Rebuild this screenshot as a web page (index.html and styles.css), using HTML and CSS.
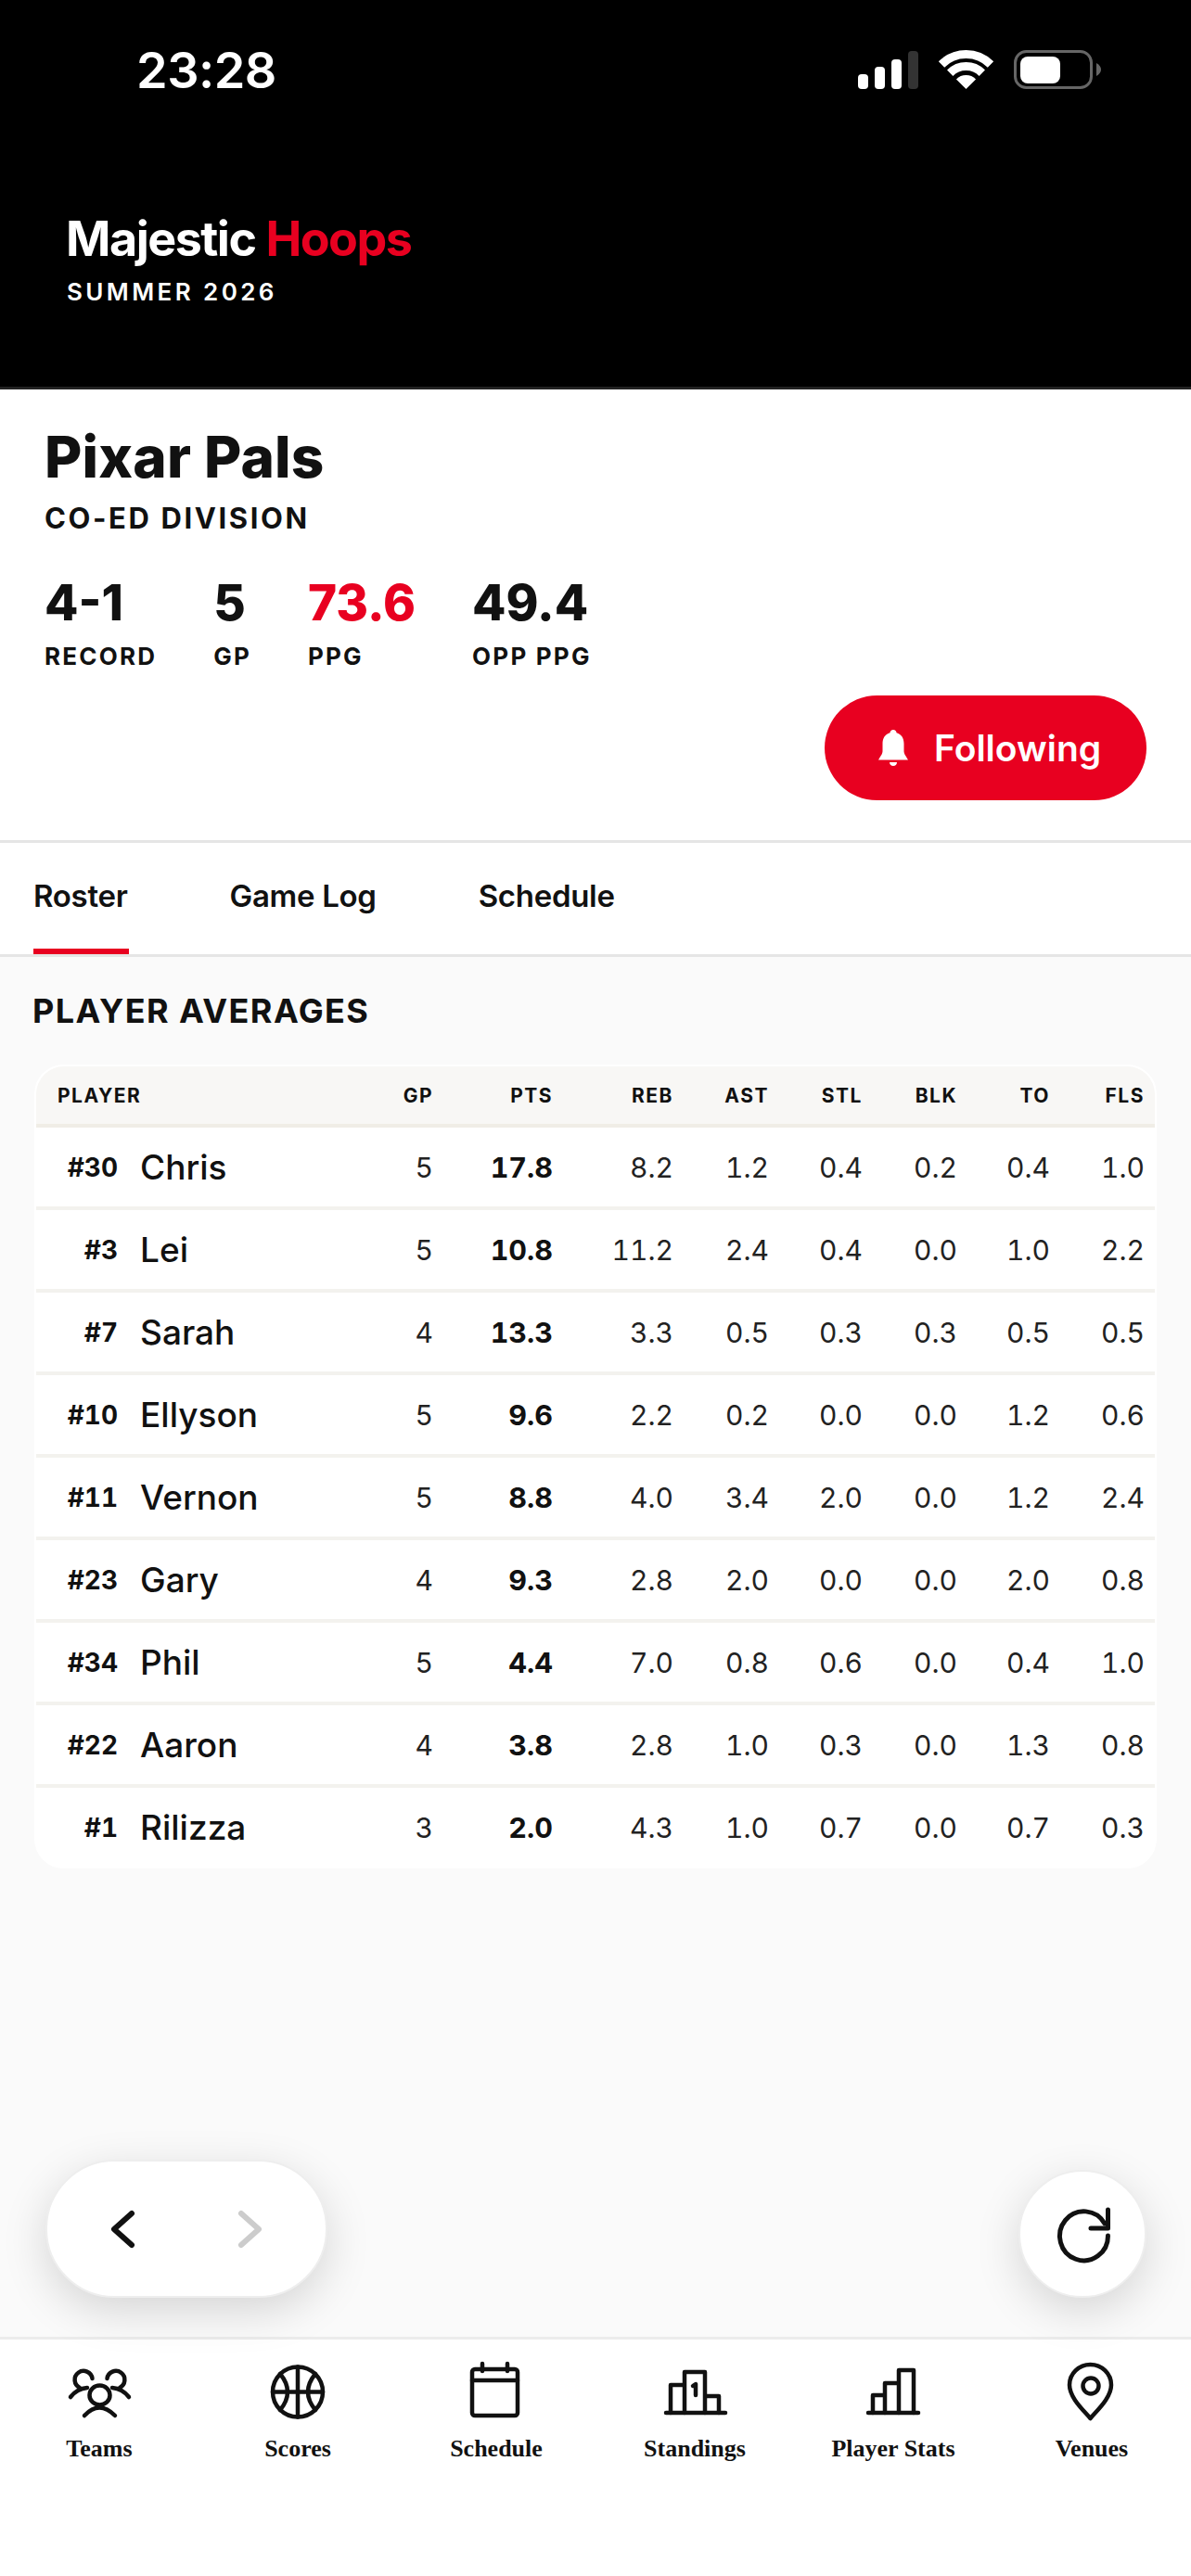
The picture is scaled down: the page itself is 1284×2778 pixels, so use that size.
FILE: index.html
```html
<!DOCTYPE html>
<html lang="en">
<head>
    <meta charset="UTF-8">
    <meta name="viewport" content="width=device-width, initial-scale=1.0">
    <title>Pixar Pals - Majestic Hoops</title>
    <link rel="stylesheet" href="styles.css">
</head>
<body>
    <header class="top">
        <div class="status-bar">
            <span class="time">23:28</span>
            <svg class="status-icons" width="262" height="44" viewBox="0 0 262 44">
                <rect x="0" y="26" width="11" height="16" rx="4" fill="#fff"/>
                <rect x="18" y="18" width="11" height="24" rx="4" fill="#fff"/>
                <rect x="36" y="10" width="11" height="32" rx="4" fill="#fff"/>
                <rect x="54" y="1" width="11" height="41" rx="4" fill="#333"/>
                <path d="M90 15.5A37.5 37.5 0 0 1 143 15.5" fill="none" stroke="#fff" stroke-width="9"/>
                <path d="M99.2 24.7A24.5 24.5 0 0 1 133.8 24.7" fill="none" stroke="#fff" stroke-width="9"/>
                <path d="M116.5 42L105.9 31.4A15 15 0 0 1 127.1 31.4Z" fill="#fff"/>
                <rect x="169.5" y="1.5" width="82" height="39" rx="12" fill="none" stroke="#666" stroke-width="3"/>
                <rect x="175" y="7" width="43" height="29" rx="8" fill="#fff"/>
                <path d="M257 14Q262 17 262 21Q262 25 257 28Z" fill="#666"/>
            </svg>
        </div>
        <div class="brand">Majestic <span class="red">Hoops</span></div>
        <div class="season">SUMMER 2026</div>
    </header>

    <section class="team">
        <h1>Pixar Pals</h1>
        <div class="division">CO-ED DIVISION</div>
        <div class="stats">
            <div><div class="stat-num">4-1</div><div class="stat-label">RECORD</div></div>
            <div><div class="stat-num">5</div><div class="stat-label">GP</div></div>
            <div><div class="stat-num red">73.6</div><div class="stat-label">PPG</div></div>
            <div><div class="stat-num">49.4</div><div class="stat-label">OPP PPG</div></div>
        </div>
        <div class="follow-row">
            <button class="follow">
                <svg width="32" height="39" viewBox="0 0 32 39">
                    <path d="M16 0C18 0 19.5 1.3 19.5 3.2C25 4.8 27.5 9.3 27.5 15V23C27.5 26 29.5 28 32 32.500H0C2.500 28 4.500 26 4.500 23V15C4.500 9.300 7 4.800 12.500 3.200C12.500 1.300 14 0 16 0Z" fill="#fff"/>
                    <path d="M12 35H20C20 37.500 18.200 39 16 39C13.800 39 12 37.500 12 35Z" fill="#fff"/>
                </svg>
                Following
            </button>
        </div>
    </section>

    <nav class="tabs">
        <a class="tab active">Roster</a>
        <a class="tab">Game Log</a>
        <a class="tab">Schedule</a>
    </nav>

    <main class="content">
        <h2>PLAYER AVERAGES</h2>
        <div class="card">
            <table>
                <colgroup>
                    <col class="col-player"><col class="col-gp"><col class="col-pts"><col class="col-reb">
                    <col class="col-ast"><col class="col-stl"><col class="col-blk"><col class="col-to"><col class="col-fls">
                </colgroup>
                <thead>
                    <tr><th class="th-player">PLAYER</th><th>GP</th><th>PTS</th><th>REB</th><th>AST</th><th>STL</th><th>BLK</th><th>TO</th><th>FLS</th></tr>
                </thead>
                <tbody>
                    <tr><td class="player"><span class="num">#30</span><span class="name">Chris</span></td><td>5</td><td class="pts">17.8</td><td>8.2</td><td>1.2</td><td>0.4</td><td>0.2</td><td>0.4</td><td>1.0</td></tr>
                    <tr><td class="player"><span class="num">#3</span><span class="name">Lei</span></td><td>5</td><td class="pts">10.8</td><td>11.2</td><td>2.4</td><td>0.4</td><td>0.0</td><td>1.0</td><td>2.2</td></tr>
                    <tr><td class="player"><span class="num">#7</span><span class="name">Sarah</span></td><td>4</td><td class="pts">13.3</td><td>3.3</td><td>0.5</td><td>0.3</td><td>0.3</td><td>0.5</td><td>0.5</td></tr>
                    <tr><td class="player"><span class="num">#10</span><span class="name">Ellyson</span></td><td>5</td><td class="pts">9.6</td><td>2.2</td><td>0.2</td><td>0.0</td><td>0.0</td><td>1.2</td><td>0.6</td></tr>
                    <tr><td class="player"><span class="num">#11</span><span class="name">Vernon</span></td><td>5</td><td class="pts">8.8</td><td>4.0</td><td>3.4</td><td>2.0</td><td>0.0</td><td>1.2</td><td>2.4</td></tr>
                    <tr><td class="player"><span class="num">#23</span><span class="name">Gary</span></td><td>4</td><td class="pts">9.3</td><td>2.8</td><td>2.0</td><td>0.0</td><td>0.0</td><td>2.0</td><td>0.8</td></tr>
                    <tr><td class="player"><span class="num">#34</span><span class="name">Phil</span></td><td>5</td><td class="pts">4.4</td><td>7.0</td><td>0.8</td><td>0.6</td><td>0.0</td><td>0.4</td><td>1.0</td></tr>
                    <tr><td class="player"><span class="num">#22</span><span class="name">Aaron</span></td><td>4</td><td class="pts">3.8</td><td>2.8</td><td>1.0</td><td>0.3</td><td>0.0</td><td>1.3</td><td>0.8</td></tr>
                    <tr><td class="player"><span class="num">#1</span><span class="name">Rilizza</span></td><td>3</td><td class="pts">2.0</td><td>4.3</td><td>1.0</td><td>0.7</td><td>0.0</td><td>0.7</td><td>0.3</td></tr>
                </tbody>
            </table>
        </div>
    </main>

    <footer class="bottom-nav">
        <a class="nav-item">
            <svg viewBox="0 0 72 72">
                <ellipse cx="36.500" cy="41" rx="11" ry="10.500"/>
                <path d="M20 63Q36 46 53 63"/>
                <path d="M28.500 23A9.500 9.500 0 1 0 15 33"/>
                <path d="M23 33Q12 34 5 43"/>
                <path d="M44.500 23A9.500 9.500 0 1 1 58 33"/>
                <path d="M50 33Q61 34 68 43"/>
            </svg>
            <span>Teams</span>
        </a>
        <a class="nav-item">
            <svg viewBox="0 0 72 72">
                <circle cx="36" cy="37.500" r="27"/>
                <path d="M36 10.500V64.500M9 37.500H63M17 18Q33 37.500 17 57M55 18Q39 37.500 55 57"/>
            </svg>
            <span>Scores</span>
        </a>
        <a class="nav-item">
            <svg viewBox="0 0 72 72">
                <rect x="10" y="13" width="49" height="50" rx="3"/>
                <path d="M10 25H59M21 7V15M48 7V15"/>
            </svg>
            <span>Schedule</span>
        </a>
        <a class="nav-item">
            <svg viewBox="0 0 72 72">
                <path d="M5 60H69"/>
                <path d="M10 60V30H25M25 60V16H47V60M47 42H62V60"/>
                <path d="M34 31L37 29V41"/>
            </svg>
            <span>Standings</span>
        </a>
        <a class="nav-item">
            <svg viewBox="0 0 72 72">
                <path d="M9 60H63"/>
                <path d="M14 60V41H27M27 60V28H42M42 60V14H58V60"/>
            </svg>
            <span>Player Stats</span>
        </a>
        <a class="nav-item">
            <svg viewBox="0 0 72 72">
                <path d="M34.500 66C28 58 12 44 12 30A22.500 22 0 0 1 57 30C57 44 41 58 34.500 66Z"/>
                <circle cx="35" cy="31" r="8.500"/>
            </svg>
            <span>Venues</span>
        </a>
    </footer>

    <div class="pager">
        <button class="pager-btn">
            <svg width="60" height="56" viewBox="0 0 60 56"><path d="M40 11L21 28L40 45"/></svg>
        </button>
        <button class="pager-btn off">
            <svg width="60" height="56" viewBox="0 0 60 56"><path d="M20 11L39 28L20 45"/></svg>
        </button>
    </div>
    <button class="refresh">
        <svg width="72" height="72" viewBox="0 0 72 72">
            <path d="M63.500 38A26 26.500 0 1 1 60 25"/>
            <path d="M63.500 10V30H45"/>
        </svg>
    </button>
</body>
</html>
```

FILE: styles.css
```css
* {
    box-sizing: border-box;
}
body {
    margin: 0;
    width: 1284px;
    height: 2778px;
    position: relative;
    display: flex;
    flex-direction: column;
    background: #fff;
    color: #111;
    font-family: Inter, "Liberation Sans", sans-serif;
}
.red {
    color: #e80020;
}

/* black header */
.top {
    height: 420px;
    background: #000;
    color: #fff;
    border-bottom: 3px solid #222;
    padding: 46px 97px 0 71px;
}
.status-bar {
    display: flex;
    justify-content: space-between;
    align-items: center;
    height: 60px;
    padding-left: 76px;
}
.time {
    font-size: 54px;
    font-weight: 600;
    line-height: 60px;
    letter-spacing: -0.5px;
}
.brand {
    margin-top: 122px;
    font-size: 52px;
    font-weight: 700;
    line-height: 60px;
    letter-spacing: -1.5px;
}
.season {
    margin-top: 12px;
    margin-left: 1px;
    font-size: 26px;
    font-weight: 600;
    line-height: 30px;
    letter-spacing: 3.4px;
}

/* team summary */
.team {
    padding: 38px 48px 0 48px;
    height: 486px;
}
.team h1 {
    margin: 0;
    font-size: 62px;
    font-weight: 800;
    line-height: 70px;
    letter-spacing: 0.2px;
}
.division {
    margin-top: 13px;
    font-size: 31px;
    font-weight: 700;
    line-height: 36px;
    letter-spacing: 2.6px;
}
.stats {
    display: flex;
    gap: 61px;
    margin-top: 45px;
}
.stat-num {
    font-size: 53px;
    font-weight: 800;
    line-height: 56px;
}
.stat-label {
    margin-top: 15px;
    font-size: 26px;
    font-weight: 700;
    line-height: 30px;
    letter-spacing: 2.2px;
}
.follow-row {
    display: flex;
    justify-content: flex-end;
    margin-top: 27px;
}
.follow {
    display: flex;
    align-items: center;
    gap: 28px;
    width: 347px;
    height: 113px;
    padding: 0 0 0 58px;
    border: none;
    border-radius: 57px;
    background: #e80020;
    color: #fff;
    font-family: inherit;
    font-size: 39px;
    font-weight: 600;
}

/* tabs */
.tabs {
    display: flex;
    gap: 110px;
    height: 126px;
    padding-left: 36px;
    border-top: 3px solid #e5e5e5;
    border-bottom: 3px solid #e5e5e5;
}
.tab {
    display: block;
    height: 120px;
    padding-top: 35px;
    font-size: 33px;
    font-weight: 600;
    line-height: 44px;
    letter-spacing: -0.3px;
}
.tab.active {
    padding-right: 2px;
    margin-right: -2px;
    border-bottom: 6px solid #e80020;
}

/* averages table */
.content {
    flex: 1;
    background: #fafafa;
    padding: 36px 37px 0 37px;
}
.content h2 {
    margin: 0 0 0 -2px;
    font-size: 36px;
    font-weight: 700;
    line-height: 44px;
    letter-spacing: 1.4px;
}
.card {
    margin-top: 36px;
    width: 1210px;
    border: 2px solid #fff;
    border-radius: 32px;
    background: #fff;
    overflow: hidden;
}
table {
    width: 1206px;
    table-layout: fixed;
    border-collapse: separate;
    border-spacing: 0;
}
.col-player { width: 349px; }
.col-gp { width: 90px; }
.col-pts { width: 129px; }
.col-reb { width: 130px; }
.col-ast { width: 103px; }
.col-stl { width: 101px; }
.col-blk { width: 102px; }
.col-to { width: 100px; }
.col-fls { width: 102px; }
th {
    height: 66px;
    padding: 0 11px 0 0;
    background: #f8f7f5;
    border-bottom: 4px solid #f0ede6;
    font-size: 21px;
    font-weight: 700;
    letter-spacing: 1.5px;
    text-align: right;
}
th.th-player {
    padding-left: 23px;
    text-align: left;
}
td {
    height: 89px;
    padding: 0 11px 0 0;
    border-bottom: 4px solid #f3f2ee;
    font-size: 30px;
    font-weight: 400;
    text-align: right;
    color: #222;
    font-variant-numeric: tabular-nums;
}
tbody tr:last-child td {
    height: 85px;
    border-bottom: none;
}
td.pts {
    font-size: 30.5px;
    font-weight: 700;
    color: #111;
}
td.player {
    padding: 0;
    text-align: left;
    white-space: nowrap;
}
.num {
    display: inline-block;
    width: 88px;
    margin-right: 24px;
    font-size: 28px;
    font-weight: 700;
    text-align: right;
    color: #111;
    vertical-align: middle;
}
.name {
    font-size: 37px;
    font-weight: 500;
    color: #111;
    vertical-align: middle;
}

/* bottom nav */
.bottom-nav {
    display: grid;
    grid-template-columns: repeat(6, 1fr);
    height: 258px;
    padding-top: 19px;
    background: #fff;
    border-top: 3px solid #ececec;
}
.nav-item {
    display: flex;
    flex-direction: column;
    align-items: center;
    font-family: "Liberation Serif", serif;
    font-size: 26px;
    font-weight: 700;
    line-height: 30px;
}
.nav-item svg {
    width: 72px;
    height: 72px;
    margin-bottom: 12px;
    fill: none;
    stroke: #111;
    stroke-width: 4.5;
    stroke-linecap: round;
    stroke-linejoin: round;
}

/* floating buttons */
.pager {
    position: absolute;
    left: 49px;
    bottom: 300px;
    width: 304px;
    height: 149px;
    display: flex;
    justify-content: center;
    align-items: center;
    gap: 78px;
    background: #fff;
    border: 2px solid #eee;
    border-radius: 75px;
    box-shadow: 0 14px 48px rgba(0, 0, 0, 0.15);
}
.pager-btn {
    padding: 0;
    border: none;
    background: none;
    display: flex;
}
.pager-btn path {
    fill: none;
    stroke: #111;
    stroke-width: 6;
    stroke-linecap: round;
    stroke-linejoin: round;
}
.pager-btn.off path {
    stroke: #ccc;
}
.refresh {
    position: absolute;
    right: 48px;
    bottom: 300px;
    width: 138px;
    height: 138px;
    padding: 0;
    display: flex;
    justify-content: center;
    align-items: center;
    background: #fff;
    border: 2px solid #eee;
    border-radius: 50%;
    box-shadow: 0 14px 48px rgba(0, 0, 0, 0.15);
}
.refresh path {
    fill: none;
    stroke: #111;
    stroke-width: 5;
    stroke-linecap: round;
    stroke-linejoin: round;
}
```
